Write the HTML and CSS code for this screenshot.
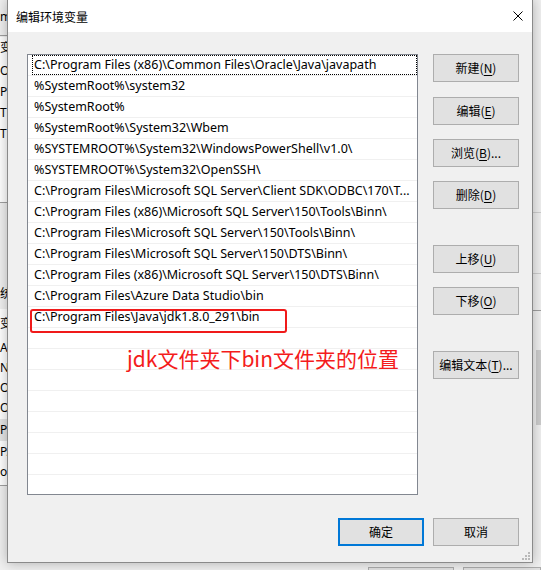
FILE: index.html
```html
<!DOCTYPE html>
<html lang="zh-CN">
<head>
<meta charset="utf-8">
<title>编辑环境变量</title>
<link rel="stylesheet" href="styles.css">
</head>
<body>
<div class="desktop">
  <div class="backwin">
    <div class="bw-top"><span class="bw-text t1">m</span></div>
    <div class="bw-list l1">
      <span class="bw-text t2">变</span>
      <span class="bw-text t3">Or</span>
      <span class="bw-text t4">Pa</span>
      <span class="bw-text t5">TE</span>
      <span class="bw-text t6">TM</span>
    </div>
    <div class="bw-sep s1"></div>
    <span class="bw-text t7">统</span>
    <div class="bw-list l2">
      <span class="bw-text t8">变</span>
      <span class="bw-text t9">A</span>
      <span class="bw-text t10">N</span>
      <span class="bw-text t11">O</span>
      <span class="bw-text t12">O</span>
      <div class="bw-hl"></div>
      <span class="bw-text t13">Pa</span>
      <span class="bw-text t14">PA</span>
      <span class="bw-text t15">ol</span>
    </div>
    <div class="bw-sep s2"></div>
    <div class="bw-rline r1"></div>
    <div class="bw-rline r2"></div>
    <div class="bw-rline r3"></div>
    <div class="bw-rbar"></div>
    <div class="bw-btn b1"></div>
    <div class="bw-btn b2"></div>
  </div>

  <div class="dialog">
    <div class="titlebar">
      <span class="title">编辑环境变量</span>
      <svg class="close" width="10" height="10" viewBox="0 0 10 10"><path d="M0.5 0.5 L9.5 9.5 M9.5 0.5 L0.5 9.5" stroke="#000" stroke-width="1" fill="none"/></svg>
    </div>
    <div class="body">
      <div class="main">
        <div class="listbox">
          <div class="row focus"><span class="cell">C:\Program Files (x86)\Common Files\Oracle\Java\javapath</span></div>
          <div class="row"><span class="cell">%SystemRoot%\system32</span></div>
          <div class="row"><span class="cell">%SystemRoot%</span></div>
          <div class="row"><span class="cell">%SystemRoot%\System32\Wbem</span></div>
          <div class="row"><span class="cell">%SYSTEMROOT%\System32\WindowsPowerShell\v1.0\</span></div>
          <div class="row"><span class="cell">%SYSTEMROOT%\System32\OpenSSH\</span></div>
          <div class="row"><span class="cell">C:\Program Files\Microsoft SQL Server\Client SDK\ODBC\170\T...</span></div>
          <div class="row"><span class="cell">C:\Program Files (x86)\Microsoft SQL Server\150\Tools\Binn\</span></div>
          <div class="row"><span class="cell">C:\Program Files\Microsoft SQL Server\150\Tools\Binn\</span></div>
          <div class="row"><span class="cell">C:\Program Files\Microsoft SQL Server\150\DTS\Binn\</span></div>
          <div class="row"><span class="cell">C:\Program Files (x86)\Microsoft SQL Server\150\DTS\Binn\</span></div>
          <div class="row"><span class="cell">C:\Program Files\Azure Data Studio\bin</span></div>
          <div class="row"><span class="cell">C:\Program Files\Java\jdk1.8.0_291\bin</span></div>
          <div class="row"><span class="cell"></span></div>
          <div class="row"><span class="cell"></span></div>
          <div class="row"><span class="cell"></span></div>
          <div class="row"><span class="cell"></span></div>
          <div class="row"><span class="cell"></span></div>
          <div class="row"><span class="cell"></span></div>
          <div class="row"><span class="cell"></span></div>
          <div class="row"><span class="cell"></span></div>
          <div class="mark-box"></div>
          <div class="mark-text">jdk文件夹下bin文件夹的位置</div>
        </div>
        <div class="side">
          <button class="btn b-new">新建(<u>N</u>)</button>
          <button class="btn b-edit">编辑(<u>E</u>)</button>
          <button class="btn b-browse">浏览(<u>B</u>)...</button>
          <button class="btn b-del">删除(<u>D</u>)</button>
          <button class="btn b-up">上移(<u>U</u>)</button>
          <button class="btn b-down">下移(<u>O</u>)</button>
          <button class="btn b-text">编辑文本(<u>T</u>)...</button>
        </div>
      </div>
      <div class="footer">
        <button class="btn primary">确定</button>
        <button class="btn">取消</button>
      </div>
    </div>
    <svg class="grip" width="8" height="8" viewBox="0 0 8 8">
      <rect x="6" y="0" width="2" height="2" fill="#b9b9b9"/>
      <rect x="3" y="3" width="2" height="2" fill="#b9b9b9"/>
      <rect x="6" y="3" width="2" height="2" fill="#b9b9b9"/>
      <rect x="0" y="6" width="2" height="2" fill="#b9b9b9"/>
      <rect x="3" y="6" width="2" height="2" fill="#b9b9b9"/>
      <rect x="6" y="6" width="2" height="2" fill="#b9b9b9"/>
    </svg>
  </div>
</div>
</body>
</html>
```

FILE: styles.css
```css
* { box-sizing: border-box; }
html, body {
  margin: 0;
  padding: 0;
  width: 541px;
  height: 570px;
  overflow: hidden;
}
body {
  background: #f0f0f0;
  font-family: "Noto Sans", "Noto Sans CJK SC", sans-serif;
  font-size: 12px;
  color: #000;
}
.desktop {
  position: relative;
  width: 541px;
  height: 570px;
  overflow: hidden;
}

/* ---------- background window (partly visible) ---------- */
.backwin {
  position: absolute;
  inset: 0;
  background: #f0f0f0;
}
.bw-top {
  position: absolute;
  left: 0; top: 0;
  width: 40px; height: 36px;
  border-bottom: 1px solid #a0a0a0;
}
.bw-text {
  position: absolute;
  font-family: "Noto Sans", "Noto Sans CJK SC", sans-serif;
  font-size: 12px;
  line-height: 16px;
  white-space: nowrap;
}
.t1 { left: 0; top: 9px; }
.bw-list {
  position: absolute;
  left: 0;
  width: 40px;
  background: #fff;
}
.l1 { top: 37px; height: 165px; }
.l2 { top: 309px; height: 176px; }
.t2 { left: 0; top: 2px; font-family: "Noto Sans CJK SC", sans-serif; }
.t3 { left: 0; top: 26px; }
.t4 { left: 0; top: 47px; }
.t5 { left: 0; top: 68px; }
.t6 { left: 0; top: 89px; }
.bw-sep {
  position: absolute;
  left: 0;
  width: 40px;
  height: 1px;
  background: #a0a0a0;
}
.s1 { top: 202px; }
.s2 { top: 485px; }
.t7 { left: 0; top: 285px; font-family: "Noto Sans CJK SC", sans-serif; }
.t8 { left: 0; top: 6px; font-family: "Noto Sans CJK SC", sans-serif; }
.t9 { left: 0; top: 31px; }
.t10 { left: 0; top: 51px; }
.t11 { left: 0; top: 71px; }
.t12 { left: 0; top: 91px; }
.bw-hl {
  position: absolute;
  left: 0; top: 110px;
  width: 40px; height: 22px;
  background: #e5e5e5;
}
.t13 { left: 0; top: 113px; }
.t14 { left: 0; top: 135px; }
.t15 { left: 0; top: 155px; }
.bw-rline {
  position: absolute;
  left: 520px;
  width: 21px;
  height: 1px;
  background: #cfcfcf;
}
.r1 { top: 212px; }
.r2 { top: 273px; }
.r3 { top: 310px; background: #a0a0a0; }
.bw-rbar {
  position: absolute;
  left: 536px; top: 350px;
  width: 5px; height: 75px;
  background: #cdcdcd;
}
.bw-btn {
  position: absolute;
  top: 567px;
  height: 3px;
  border: 1px solid #adadad;
  border-bottom: 0;
  background: #e1e1e1;
}
.b1 { left: 368px; width: 86px; }
.b2 { left: 463px; width: 78px; }

/* ---------- dialog ---------- */
.dialog {
  position: absolute;
  left: 7px;
  top: -1px;
  width: 526px;
  height: 564px;
  border: 1px solid #8a8a8a;
  background: #f0f0f0;
  box-shadow: 0 0 12px rgba(0, 0, 0, 0.28);
  display: flex;
  flex-direction: column;
}
.titlebar {
  height: 32px;
  flex: none;
  background: #fff;
  display: flex;
  align-items: center;
  justify-content: space-between;
  padding: 0 9px 0 8px;
}
.title {
  font-family: "Noto Sans CJK SC", sans-serif;
  font-size: 12px;
}
.close { display: block; margin-top: -1px; }

.body {
  flex: 1;
  padding: 22px 13px 0 19px;
  display: flex;
  flex-direction: column;
}
.main {
  display: grid;
  grid-template-columns: 391px 86px;
  column-gap: 15px;
}
.listbox {
  position: relative;
  height: 441px;
  border: 1px solid #828790;
  background: #fff;
  overflow: hidden;
}
.row {
  height: 21px;
  border-bottom: 1px solid #f0f0f0;
  display: flex;
}
.cell {
  flex: 1;
  min-width: 0;
  margin-left: 4px;
  padding: 0 4px 0 1px;
  border: 1px solid transparent;
  line-height: 18px;
  white-space: nowrap;
  overflow: hidden;
  font-family: "Noto Sans", sans-serif;
  font-size: 12.5px;
}
.focus .cell { border: 1px dotted #000; }

.mark-box {
  position: absolute;
  left: 2px;
  top: 254px;
  width: 257px;
  height: 24px;
  border: 2px solid #f01a1a;
  border-radius: 3px;
}
.mark-text {
  position: absolute;
  left: 99px;
  top: 290px;
  font-family: "Noto Sans CJK SC", sans-serif;
  font-size: 21px;
  line-height: 26px;
  color: #f41c1c;
  white-space: nowrap;
}

.side {
  display: flex;
  flex-direction: column;
}
.btn {
  height: 28px;
  width: 86px;
  padding: 0;
  border: 1px solid #adadad;
  background: #e1e1e1;
  font-family: "Noto Sans CJK SC", sans-serif;
  font-size: 12px;
  color: #000;
  line-height: 16px;
}
.btn u { text-decoration-thickness: 1px; text-underline-offset: 2px; }
.b-edit { margin-top: 15px; }
.b-browse { margin-top: 14px; }
.b-del { margin-top: 14px; }
.b-up { margin-top: 36px; }
.b-down { margin-top: 14px; }
.b-text { margin-top: 36px; }

.footer {
  margin-top: 23px;
  display: flex;
  justify-content: flex-end;
  gap: 9px;
}
.primary { border: 2px solid #0078d7; }

.grip {
  position: absolute;
  right: 2px;
  bottom: 2px;
}
```
